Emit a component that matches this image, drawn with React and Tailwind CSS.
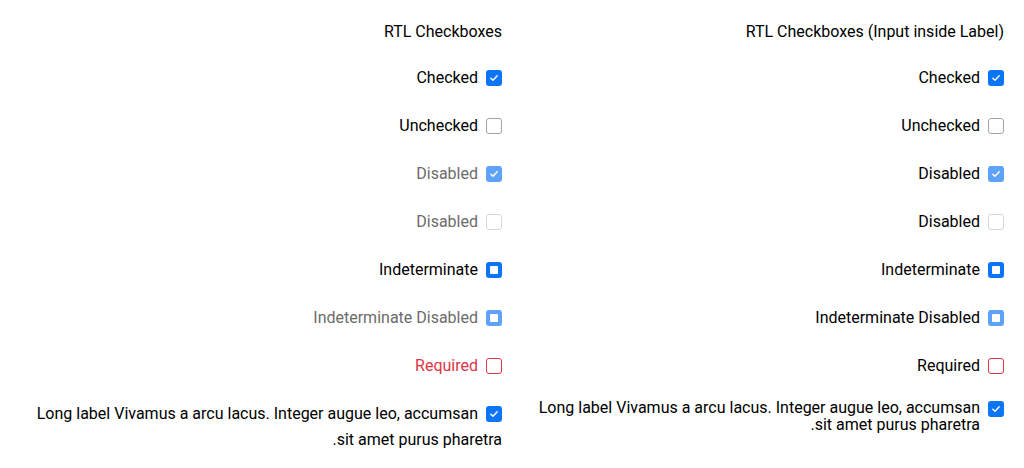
import React from "react";

const ROWS = [
  { label: "Checked", state: "checked" },
  { label: "Unchecked", state: "unchecked" },
  { label: "Disabled", state: "checked", disabled: true },
  { label: "Disabled", state: "unchecked", disabled: true },
  { label: "Indeterminate", state: "indeterminate" },
  { label: "Indeterminate Disabled", state: "indeterminate", disabled: true },
  { label: "Required", state: "unchecked", required: true },
  {
    label: "Long label Vivamus a arcu lacus. Integer augue leo, accumsan sit amet purus pharetra.",
    state: "checked",
    long: true,
  },
];

function Box({ state, disabled, required, inline }) {
  const base = inline ? "inline-flex align-[0px]" : "flex";
  if (state === "checked") {
    return (
      <span
        className={`${base} h-4 w-4 shrink-0 items-center justify-center rounded-[3px] ${disabled ? "bg-[#5fa3f8]" : "bg-[#0b75f5]"}`}
      >
        <svg width="10" height="10" viewBox="0 0 10 10" fill="none">
          <path d="M1.8 5.2 L4 7.3 L8.2 2.8" stroke="white" strokeWidth="1.4" strokeLinecap="round" strokeLinejoin="round" />
        </svg>
      </span>
    );
  }
  if (state === "indeterminate") {
    return (
      <span
        className={`${base} h-4 w-4 shrink-0 items-center justify-center rounded-[3px] ${disabled ? "bg-[#5fa3f8]" : "bg-[#0b75f5]"}`}
      >
        <span className="h-[8px] w-[8px] rounded-[1px] bg-white" />
      </span>
    );
  }
  const border = required ? "border-[#dc3545]" : disabled ? "border-[#d6d6d6]" : "border-[#a3a3a3]";
  return <span className={`h-4 w-4 shrink-0 rounded-[3px] border bg-white ${border}`} />;
}

function Row({ row, inside }) {
  let color = "text-black";
  if (!inside) {
    if (row.disabled) color = "text-[#6b6b6b]";
    if (row.required) color = "text-[#dc3545]";
  }
  if (row.long && !inside) {
    // checkbox sits inline in the text flow, so the second line runs under it
    return (
      <div dir="rtl" className={`-mt-[1px] leading-[26px] ${color}`}>
        <Box state={row.state} inline />
        <span className="mr-2">{row.label}</span>
      </div>
    );
  }
  if (row.long) {
    return (
      <div dir="rtl" className="flex items-start gap-2">
        <span className="-mt-[1px]">
          <Box state={row.state} />
        </span>
        <span className={`-mt-[2px] leading-[16.5px] ${color}`}>{row.label}</span>
      </div>
    );
  }
  return (
    <div dir="rtl" className="flex h-6 items-center gap-2">
      <Box state={row.state} disabled={row.disabled} required={row.required} />
      <span className={`leading-6 ${color}`}>{row.label}</span>
    </div>
  );
}

function Column({ title, inside }) {
  return (
    <div dir="rtl">
      <div className="leading-6 text-black">{title}</div>
      <div className="mt-[22px] flex flex-col gap-6">
        {ROWS.map((row, i) => (
          <Row key={i} row={row} inside={inside} />
        ))}
      </div>
    </div>
  );
}

export default function App() {
  return (
    <div className="grid min-h-[468px] grid-cols-2 gap-5 bg-white p-5 text-[16px]" style={{ fontFamily: "Roboto, sans-serif" }}>
      <Column title="RTL Checkboxes" />
      <Column title="RTL Checkboxes (Input inside Label)" inside />
    </div>
  );
}
